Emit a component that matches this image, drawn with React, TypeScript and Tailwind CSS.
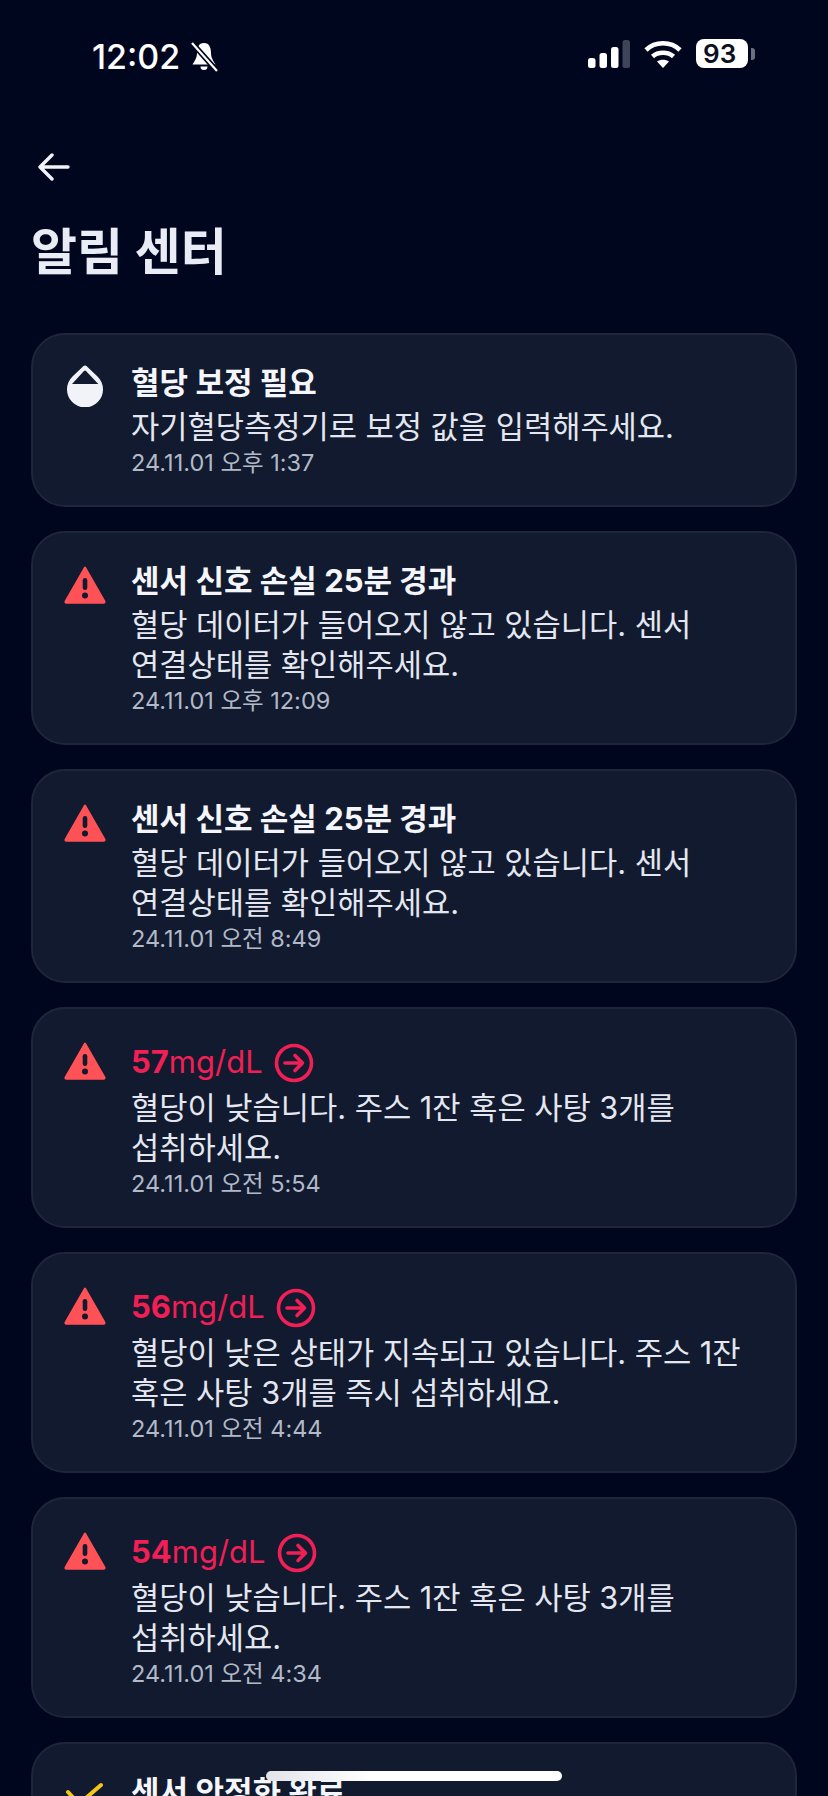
import React from 'react';

const TriangleIcon = () => (
  <svg className="w-[44px] h-[40px] mt-[4px]" viewBox="0 0 44 40">
    <path d="M22 2.5 L41.5 36.5 a0.8 0.8 0 0 1 -0.7 1.2 H3.2 a0.8 0.8 0 0 1 -0.7 -1.2 Z" fill="#ff5257" stroke="#ff5257" strokeWidth="2" strokeLinejoin="round" />
    <rect x="19.7" y="13" width="4.6" height="12" rx="2.3" fill="#111a2e" />
    <circle cx="22" cy="30.5" r="3" fill="#111a2e" />
  </svg>
);

const DropIcon = () => (
  <svg className="w-[44px] h-[44px]" viewBox="0 0 44 44">
    <path d="M20 3.5 a3 3 0 0 1 4 0 L34.5 13.5 A18 18 0 1 1 9.5 13.5 Z" fill="#f1f3f8" />
    <path d="M21 8 a1.5 1.5 0 0 1 2 0 L35.3 21 H9 Z" fill="#111a2e" />
  </svg>
);

const CheckIcon = () => (
  <svg className="w-[44px] h-[44px] mt-[4px]" viewBox="0 0 44 44">
    <path d="M5 16 L16 28 L38 9" fill="none" stroke="#f5c518" strokeWidth="4" strokeLinecap="round" strokeLinejoin="round" />
  </svg>
);

const ArrowCircle = () => (
  <svg className="w-[40px] h-[40px] ml-[11px]" viewBox="0 0 40 40" fill="none" stroke="#f01f55" strokeWidth="3.6" strokeLinecap="round" strokeLinejoin="round">
    <circle cx="20" cy="20" r="17.5" />
    <path d="M11 20 H28 M21 12.5 L28.5 20 L21 27.5" />
  </svg>
);

type Item = {
  icon: React.ReactNode;
  title?: string;
  value?: string;
  body: string[];
  time: string;
};

const items: Item[] = [
  { icon: <DropIcon />, title: '혈당 보정 필요', body: ['자기혈당측정기로 보정 값을 입력해주세요.'], time: '24.11.01 오후 1:37' },
  { icon: <TriangleIcon />, title: '센서 신호 손실 25분 경과', body: ['혈당 데이터가 들어오지 않고 있습니다. 센서', '연결상태를 확인해주세요.'], time: '24.11.01 오후 12:09' },
  { icon: <TriangleIcon />, title: '센서 신호 손실 25분 경과', body: ['혈당 데이터가 들어오지 않고 있습니다. 센서', '연결상태를 확인해주세요.'], time: '24.11.01 오전 8:49' },
  { icon: <TriangleIcon />, value: '57', body: ['혈당이 낮습니다. 주스 1잔 혹은 사탕 3개를', '섭취하세요.'], time: '24.11.01 오전 5:54' },
  { icon: <TriangleIcon />, value: '56', body: ['혈당이 낮은 상태가 지속되고 있습니다. 주스 1잔', '혹은 사탕 3개를 즉시 섭취하세요.'], time: '24.11.01 오전 4:44' },
  { icon: <TriangleIcon />, value: '54', body: ['혈당이 낮습니다. 주스 1잔 혹은 사탕 3개를', '섭취하세요.'], time: '24.11.01 오전 4:34' },
  { icon: <CheckIcon />, title: '센서 안정화 완료', body: ['센서 안정화가 완료되었습니다.'], time: '24.11.01 오전 3:34' },
];

const StatusBar = () => (
  <div className="h-[116px] flex items-start justify-between pl-[92px] pr-[73px] pt-[37px]">
    <div className="flex items-center">
      <span className="text-[34px] leading-[40px] font-medium text-white">12:02</span>
      <svg className="w-[30px] h-[30px] ml-[9px]" viewBox="0 0 30 30">
        <path d="M15 1 C9.5 1 8 6 8 11 C8 16 5.5 19 3.5 22.5 H26.5 C24.5 19 22 16 22 11 C22 6 20.5 1 15 1 Z M11.5 24.5 a3.5 3.5 0 0 0 7 0 Z" fill="#fff" />
        <path d="M3 1 L28 29" stroke="#01061f" strokeWidth="5.5" />
        <path d="M3 1 L28 29" stroke="#fff" strokeWidth="2.2" />
      </svg>
    </div>
    <div className="flex items-center mt-[2px]">
      <svg className="w-[42px] h-[28px]" viewBox="0 0 42 28">
        <rect x="0" y="18" width="7.5" height="10" rx="2.5" fill="#fff" />
        <rect x="11.5" y="13" width="7.5" height="15" rx="2.5" fill="#fff" />
        <rect x="23" y="7" width="7.5" height="21" rx="2.5" fill="#fff" />
        <rect x="34.5" y="0" width="7.5" height="28" rx="2.5" fill="#3f4559" />
      </svg>
      <svg className="w-[38px] h-[28px] ml-[14px]" viewBox="0 0 38 28" fill="none" stroke="#fff" strokeWidth="4.6">
        <path d="M2 10 C11 1 27 1 36 10" />
        <path d="M8.5 16.5 C14 11.5 24 11.5 29.5 16.5" />
        <path d="M19 28 L13 21.5 C16.5 19 21.5 19 25 21.5 Z" fill="#fff" stroke="none" />
      </svg>
      <div className="ml-[14px] flex items-center">
        <div className="w-[52px] h-[29px] rounded-[8px] bg-white flex items-center pl-[7px] text-[26px] font-semibold leading-none text-[#0b1022]">
          <span>93</span>
        </div>
        <div className="w-[4px] h-[12px] rounded-r-[3px] bg-[#6b7080] ml-[3px]" />
      </div>
    </div>
  </div>
);

export default function App() {
  return (
    <div className="relative w-[828px] h-[1796px] overflow-hidden bg-[#01061f] font-['Inter','Noto_Sans_CJK_KR',sans-serif]">
      <StatusBar />
      <div className="mt-[21px] h-[60px] pl-[38px] flex items-center">
        <svg className="w-[32px] h-[28px]" viewBox="0 0 32 28" fill="none" stroke="#f1f3f8" strokeWidth="3.4" strokeLinecap="round" strokeLinejoin="round">
          <path d="M2 14 H30 M14 2 L2 14 L14 26" />
        </svg>
      </div>
      <h1 className="mt-[23px] pl-[31px] text-[50px] leading-[64px] font-bold text-[#e9ecf5]">알림 센터</h1>
      <div className="mt-[49px] px-[31px] flex flex-col gap-[24px]">
        {items.map((item, i) => (
          <div key={i} className="flex rounded-[34px] border-2 border-[#1e2739] bg-[#111a2e] pl-[30px] pr-[24px] pt-[28px] pb-[27px]">
            <div className="w-[68px] shrink-0">{item.icon}</div>
            <div className="min-w-0">
              {item.value ? (
                <div className="flex items-center h-[51px] text-[31px] text-[#f01f55]">
                  <span className="font-bold">{item.value}</span>
                  <span>mg/dL</span>
                  <ArrowCircle />
                </div>
              ) : (
                <div className="h-[44px] leading-[40px] text-[31px] font-bold text-[#f4f6fb]">{item.title}</div>
              )}
              {item.body.map((line, j) => (
                <div key={j} className="text-[30.7px] leading-[40px] text-[#e4e7f0] whitespace-nowrap">{line}</div>
              ))}
              <div className="mt-[1px] text-[23.5px] leading-[30px] text-[#b2b9c8]">{item.time}</div>
            </div>
          </div>
        ))}
      </div>
      <div className="absolute left-[266px] top-[1771px] w-[296px] h-[10px] rounded-full bg-linear-to-r from-[#e2e4e9] to-white to-[35%]" />
    </div>
  );
}
